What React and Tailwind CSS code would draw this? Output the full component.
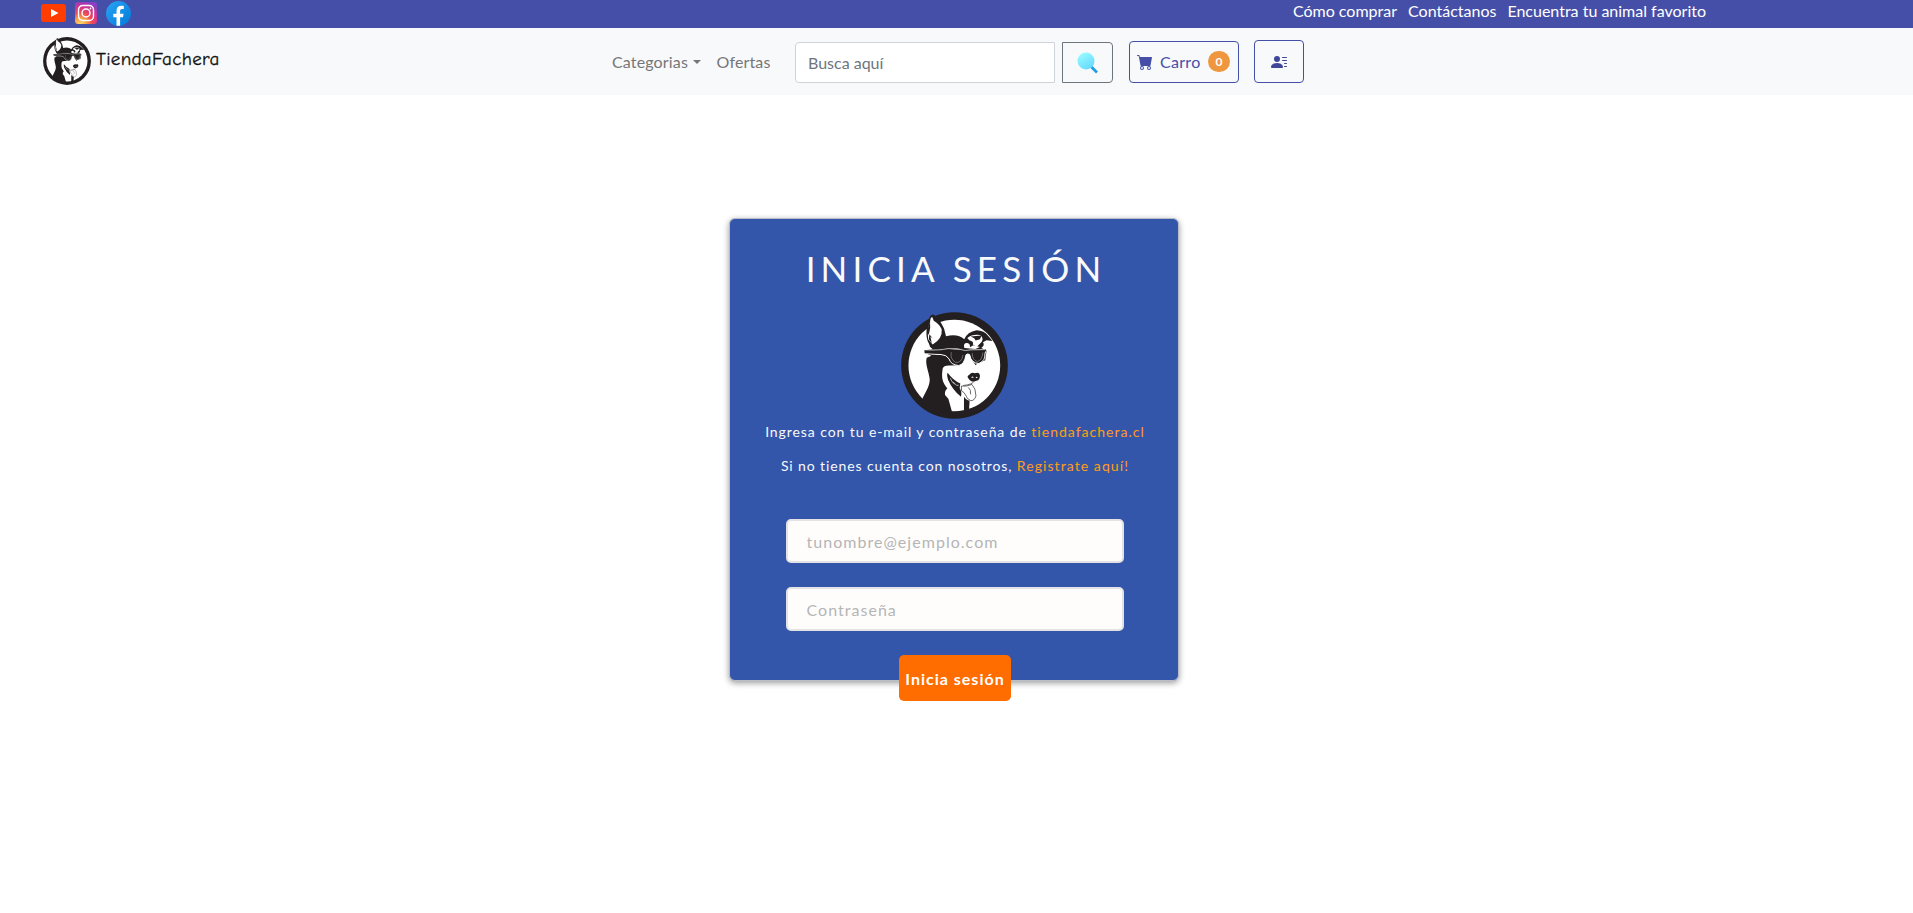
import React from 'react';
import { BsCartFill, BsPersonLinesFill } from 'react-icons/bs';

function Husky({ className }) {
  return (
    <svg viewBox="65 52 321 322" className={className} aria-hidden="true">
      <circle cx="225.500" cy="213" r="160.500" fill="#231f20" />
      <circle cx="225" cy="213" r="138" fill="#fff" />
      <path
        fill="#231f20"
        d="M148 146C139 130 139 105 147 78Q152 58 163 60Q182 74 194 102L200 125Q235 116 255 134Q264 112 292 107Q315 108 327 124L340 139L322 137L311 143Q318 152 306 160L322 168L318 197L292 208Q291 216 286 208L278 196L267 170L242 212L211 213Q193 212 190 222C185 252 190 265 204 282Q195 288 197 302L207 313L219 356L160 346L125 322C135 296 151 278 151 255C148 230 136 208 142 190L156 184L136 175L135 167L160 164Q150 158 148 146Z"
      />
      <path fill="#231f20" d="M254 307Q264 320 271 318L269 351L254 354Z" />
      <path fill="#fff" d="M152 82Q153 65 159 68L163 78Q180 88 187 104Q190 132 160 150L146 134Q143 104 152 82Z" />
      <path fill="#231f20" d="M152 82Q154 100 149 116L145 123L143 108ZM150 119L160 132L153 126L157 145L148 134Z" />
      <path fill="#fff" d="M264 130Q279 118 302 121Q315 130 307 142L292 157L281 150Q284 140 270 137Z" />
      <path fill="#231f20" d="M274 126L307 123L302 134L289 138L285 131Z" />
      <path fill="#fff" d="M255 160Q251 144 264 145Q273 146 272 158L282 152L302 157L288 163Z" />
      <path
        fill="#231f20"
        stroke="#fff"
        strokeWidth="3"
        strokeLinejoin="round"
        d="M140 177Q166 180 185 180Q202 181 209 193Q214 211 238 213Q255 211 260 181Q265 176 271 180Q276 207 299 207Q319 198 317 179L320 167L271 167L256 170Q232 160 204 167Q178 174 140 171Z"
      />
      <path fill="none" stroke="#fff" strokeWidth="1" d="M216 173Q211 193 229 204Q248 205 251 181M279 176Q279 197 294 201Q308 199 311 174" />
      <path fill="#231f20" d="M136 167Q180 170 207 163L255 166L320 164L320 171L271 172L256 174L207 171Q176 178 136 176Z" />
      <path fill="none" stroke="#fff" strokeWidth="2" d="M137 166Q180 168 206 162Q236 160 258 168L274 166L318 165" />
      <path fill="#231f20" d="M271 240Q275 233 287 236Q300 232 302 242Q303 256 292 259Q276 266 267 251Q261 246 271 240Z" />
      <path fill="#fff" d="M276 249Q279 243 283 248Q282 251 276 249ZM289 249Q291 246 295 248L293 251Z" />
      <path fill="#231f20" d="M205 235Q221 258 243 267L241 281Q249 294 245 307Q220 287 207 258Q201 241 205 235Z" />
      <path fill="none" stroke="#fff" strokeWidth="2" d="M213 251Q216 263 226 269M221 262L232 273L238 272" />
      <path
        fill="#fff"
        stroke="#231f20"
        strokeWidth="2"
        d="M246 275Q261 277 278 270Q290 282 290 304Q287 318 275 319Q263 315 259 302Q254 292 247 290Z"
      />
      <path fill="none" stroke="#231f20" strokeWidth="2" d="M267 279Q276 286 274 300M286 259Q279 271 252 273" />
    </svg>
  );
}

function YouTube() {
  return (
    <svg viewBox="0 0 25 18" className="h-[18px] w-[25px]" aria-hidden="true">
      <rect width="25" height="18" rx="3" fill="#ff3d00" />
      <path d="M10 5v8l7.500-4z" fill="#fff" />
    </svg>
  );
}

function Instagram() {
  return (
    <svg viewBox="0 0 22 22" className="size-[22px]" aria-hidden="true">
      <defs>
        <radialGradient id="ig-warm" cx="0.25" cy="1" r="1.050">
          <stop offset="0" stopColor="#ffd76a" />
          <stop offset="0.250" stopColor="#f9a64b" />
          <stop offset="0.500" stopColor="#ef4a56" />
          <stop offset="0.750" stopColor="#d23492" />
          <stop offset="1" stopColor="#8a3fc4" />
        </radialGradient>
      </defs>
      <rect width="22" height="22" rx="3" fill="url(#ig-warm)" />
      <rect x="3.500" y="3.500" width="15" height="15" rx="4.200" fill="none" stroke="#fff" strokeWidth="1.400" />
      <circle cx="11" cy="11" r="4" fill="none" stroke="#fff" strokeWidth="1.500" />
      <circle cx="15.500" cy="6.500" r="0.900" fill="#fff" />
    </svg>
  );
}

function Facebook() {
  return (
    <svg viewBox="0 0 25 25" className="size-[25px]" aria-hidden="true">
      <defs>
        <linearGradient id="fb-blue" x1="0" y1="0" x2="1" y2="1">
          <stop offset="0" stopColor="#2aa4f4" />
          <stop offset="1" stopColor="#007ad9" />
        </linearGradient>
      </defs>
      <circle cx="12.500" cy="12.500" r="12.500" fill="url(#fb-blue)" />
      <path d="M10.500 24.700v-8.400H7.300v-3.500h3.200V9.700c0-3.200 1.900-4.900 4.700-4.900.9 0 1.700.1 2.600.2v3h-1.600c-1.600 0-2.100.9-2.100 2v2.800h3.500l-.6 3.500h-2.900v8.400z" fill="#fff" />
    </svg>
  );
}

function SearchIcon() {
  return (
    <svg viewBox="0 0 22 22" className="size-[22px]" aria-hidden="true">
      <defs>
        <linearGradient id="lens" x1="0.2" y1="0" x2="0.8" y2="1">
          <stop offset="0" stopColor="#99fbff" />
          <stop offset="1" stopColor="#62d8ff" />
        </linearGradient>
      </defs>
      <path d="M14 14.500l6 6" stroke="#1b9de2" strokeWidth="2.600" />
      <circle cx="9" cy="9" r="8.500" fill="url(#lens)" />
    </svg>
  );
}

const inputClass =
  'block h-11 w-[338px] rounded-[5px] border-2 border-[#e3e3e5] bg-[#fefdfc] px-[19px] pt-px text-[16px] tracking-[1.03px] placeholder:text-[#b5b5b5] placeholder:opacity-100';

export default function App() {
  return (
    <div className="min-h-[913px] bg-white font-['Lato',sans-serif] text-[16px] leading-6">
      <header>
        <div className="flex h-7 items-start justify-between bg-[#464fa8] pr-[207px] pl-[41px]">
          <div className="flex h-[26px] items-center gap-[9px]">
            <YouTube />
            <Instagram />
            <Facebook />
          </div>
          <div className="-mt-px flex gap-[11px] text-white">
            <a href="#">Cómo comprar</a>
            <a href="#">Contáctanos</a>
            <a href="#">Encuentra tu animal favorito</a>
          </div>
        </div>
        <nav className="flex h-[67px] items-center bg-[#f8f9fb] pl-[43px]">
          <a href="#" className="flex w-[569px] items-center gap-[5px]">
            <Husky className="mb-[2px] size-12 shrink-0" />
            <span className="pb-[5px] font-['Comic_Sans_MS','Comic_Neue',cursive] text-[19px] tracking-[0.3px] text-[#111] [-webkit-text-stroke:0.3px_#111]">
              TiendaFachera
            </span>
          </a>
          <a href="#" className="flex w-[104.5px] items-center gap-[5px] tracking-[0.15px] text-[#757677]">
            Categorias
            <span className="border-x-[4.500px] border-t-[4.500px] border-x-transparent border-t-[#757677]" />
          </a>
          <a href="#" className="w-[78.5px] tracking-[0.15px] text-[#757677]">
            Ofertas
          </a>
          <div className="flex items-center gap-[7px] pt-[2px]">
            <input
              placeholder="Busca aquí"
              className="h-[41px] w-[260px] rounded-l-[4px] border border-[#ced4da] bg-white px-3 placeholder:text-[#6c757d] placeholder:opacity-100"
            />
            <button className="flex h-[41px] w-[51px] items-center justify-center rounded-r-[4px] border border-[#6c757d]">
              <SearchIcon />
            </button>
          </div>
          <button className="ml-4 flex h-[42px] w-[110px] items-center rounded-[4px] border border-[#464fa8] pl-[7px] text-[#464fa8]">
            <BsCartFill className="size-4" />
            <span className="ml-[7px] tracking-[0.3px]">Carro</span>
            <span className="ml-[7.500px] flex h-[21px] w-[22px] items-center justify-center rounded-full bg-[#ef973e] text-[12px] leading-3 font-bold text-white">
              0
            </span>
          </button>
          <button className="mb-px ml-[15px] flex h-[43px] w-[50px] items-center justify-center rounded-[4px] border border-[#464fa8] text-[#3f4798]">
            <BsPersonLinesFill className="mt-[2px] size-4" />
          </button>
        </nav>
      </header>

      <main className="flex justify-center pt-[123px] pr-[5px]">
        <form className="flex h-[463px] w-[450px] flex-col items-center rounded-[6px] border border-[#b9bec9] bg-[#3356aa] shadow-[0_2px_6px_rgba(0,0,0,0.4)]">
          <h1 className="mt-[28px] pl-[4px] text-[35px] leading-[42px] tracking-[5.15px] text-[#f8f9fb]">INICIA SESIÓN</h1>
          <Husky className="mt-[23px] ml-px size-[107px] shrink-0" />
          <p className="mt-px ml-[2px] text-[14px] leading-6 tracking-[0.92px] whitespace-nowrap text-[#f8f9fb]">
            Ingresa con tu e-mail y contraseña de{' '}
            <a href="#" className="tracking-[1.02px] text-[#ff9d14]">
              tiendafachera.cl
            </a>
          </p>
          <p className="mt-[10px] ml-[2px] text-[14px] leading-6 tracking-[0.89px] whitespace-nowrap text-[#f8f9fb]">
            Si no tienes cuenta con nosotros,{' '}
            <a href="#" className="tracking-[1.07px] text-[#ff9d14]">
              Registrate aquí!
            </a>
          </p>
          <div className="mt-[41px] ml-px flex flex-col items-center gap-6">
            <input type="email" placeholder="tunombre@ejemplo.com" className={inputClass} />
            <input type="password" placeholder="Contraseña" className={inputClass} />
            <button className="h-[46px] w-28 shrink-0 rounded-[5px] bg-[#ff6c00] pt-[2px] pl-px text-[16px] font-bold tracking-[1px] whitespace-nowrap text-white">
              Inicia sesión
            </button>
          </div>
        </form>
      </main>
    </div>
  );
}
